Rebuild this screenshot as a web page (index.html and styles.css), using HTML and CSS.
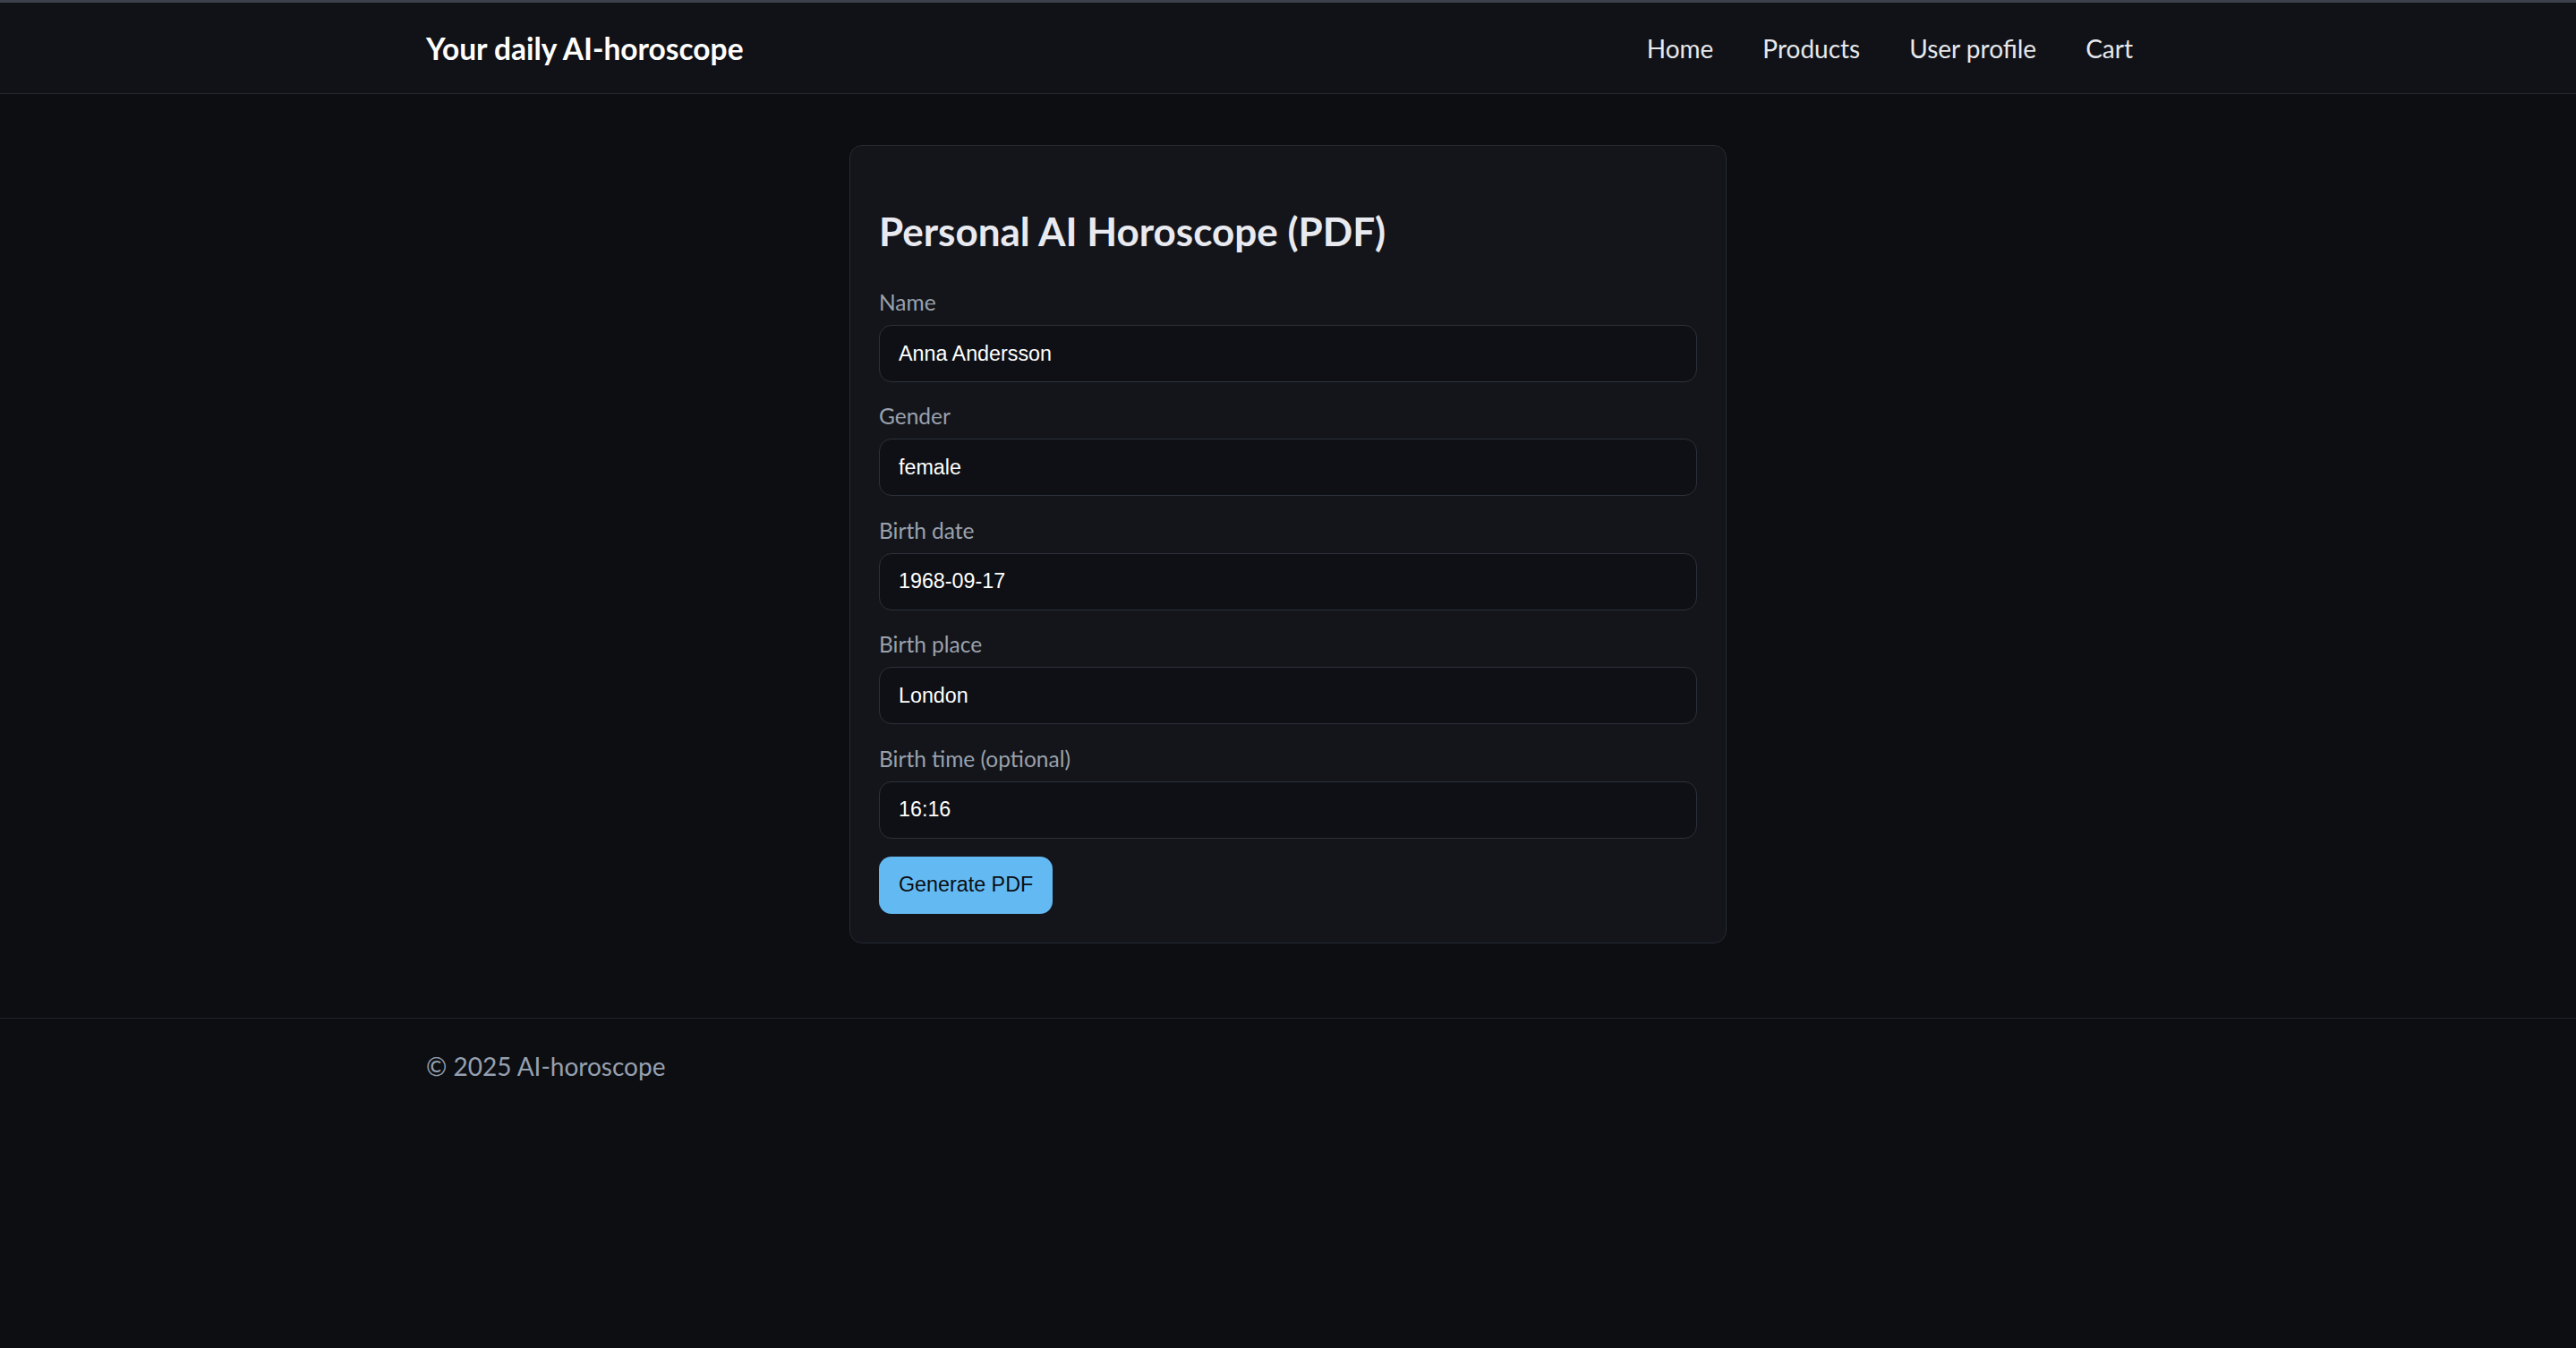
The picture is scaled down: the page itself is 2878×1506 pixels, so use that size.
FILE: index.html
```html
<!DOCTYPE html>
<html>
<head>
<meta name="viewport" content="width=device-width, initial-scale=1">
<title>Your daily AI-horoscope</title>
<link rel="stylesheet" href="styles.css">
</head>
<body>

<header class="site-header">
  <div class="container header-inner">
    <a class="brand" href="#">Your daily AI-horoscope</a>
    <nav class="main-nav">
      <a href="#">Home</a>
      <a href="#">Products</a>
      <a href="#">User profile</a>
      <a href="#">Cart</a>
    </nav>
  </div>
</header>

<main class="page">
  <section class="card">
    <h2>Personal AI Horoscope (PDF)</h2>
    <form class="horoscope-form" onsubmit="return false;">
      <div class="field">
        <label for="name">Name</label>
        <input type="text" id="name" value="Anna Andersson">
      </div>
      <div class="field">
        <label for="gender">Gender</label>
        <input type="text" id="gender" value="female">
      </div>
      <div class="field">
        <label for="birthdate">Birth date</label>
        <input type="text" id="birthdate" value="1968-09-17">
      </div>
      <div class="field">
        <label for="birthplace">Birth place</label>
        <input type="text" id="birthplace" value="London">
      </div>
      <div class="field">
        <label for="birthtime">Birth time (optional)</label>
        <input type="text" id="birthtime" value="16:16">
      </div>
      <button type="submit" class="btn-primary">Generate PDF</button>
    </form>
  </section>
</main>

<footer class="site-footer">
  <div class="container">&copy; 2025 AI-horoscope</div>
</footer>

</body>
</html>
```

FILE: styles.css
```css
body {
  margin: 0;
  background-color: #0d0e12;
  color: #e6e8ee;
  font-family: "Lato", "Segoe UI", sans-serif;
}

.container {
  max-width: 1926px;
  margin: 0 auto;
}

/* Top bar */
.site-header {
  background-color: #111217;
  border-top: 3px solid #3d414c;
  border-bottom: 1px solid #23262f;
}

.header-inner {
  height: 101px;
  display: flex;
  align-items: center;
  justify-content: space-between;
}

.brand {
  color: #ffffff;
  font-size: 33.5px;
  font-weight: 700;
  text-decoration: none;
}

.main-nav {
  display: flex;
  gap: 55px;
  padding-right: 19px;
}

.main-nav a {
  color: #e6e8ec;
  font-size: 28px;
  text-decoration: none;
}

/* Form card */
.page {
  padding: 57px 0 83px;
}

.card {
  width: 980px;
  box-sizing: border-box;
  margin: 0 auto;
  padding: 32px;
  background-color: #13151a;
  border: 1px solid #252a33;
  border-radius: 14px;
}

.card h2 {
  margin: 37px 0 35px;
  font-size: 44px;
  font-weight: 700;
  line-height: 1.2;
  color: #e8eaf0;
}

.field {
  margin-bottom: 20.2px;
}

.field label {
  display: block;
  margin-bottom: 6.5px;
  font-size: 24.5px;
  line-height: 1.5;
  color: #9aa1ad;
}

.field input {
  display: block;
  width: 100%;
  height: 64px;
  box-sizing: border-box;
  padding: 0 21px;
  background-color: #0e1015;
  border: 1px solid #2c313c;
  border-radius: 14px;
  color: #ffffff;
  font-family: "Liberation Sans", Arial, sans-serif;
  font-size: 23.3px;
  outline: none;
}

.btn-primary {
  height: 64px;
  padding: 0 22px;
  background-color: #63baf3;
  border: none;
  border-radius: 14px;
  color: #0b0d12;
  font-family: "Liberation Sans", Arial, sans-serif;
  font-size: 23.3px;
  cursor: pointer;
}

/* Footer */
.site-footer {
  border-top: 1px solid #1f232c;
  padding: 36px 0;
  font-size: 28px;
  color: #95a0b0;
}
```
